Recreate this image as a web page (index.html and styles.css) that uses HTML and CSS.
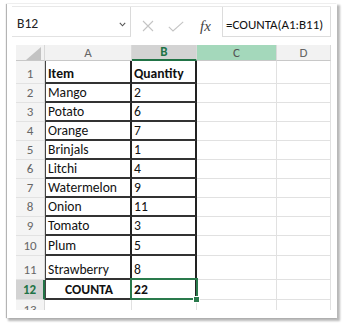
FILE: index.html
```html
<!DOCTYPE html>
<html>
<head>
<meta charset="utf-8">
<link rel="stylesheet" href="styles.css">
</head>
<body>
<div class="frame">
  <div class="fbar">
    <div class="namebox">
      <span class="nb-text">B12</span>
      <svg class="chev" width="7" height="5" viewBox="0 0 7 5"><path d="M0.8 0.8 L3.5 3.8 L6.2 0.8" fill="none" stroke="#555" stroke-width="1.1"/></svg>
    </div>
    <div class="fbtns">
      <svg class="ico-x" width="12" height="12" viewBox="0 0 12 12"><path d="M1 1 L11 11 M11 1 L1 11" stroke="#c4c4c4" stroke-width="1.1" fill="none"/></svg>
      <svg class="ico-ok" width="16" height="11" viewBox="0 0 16 11"><path d="M0.8 5.8 L5 10 L15.2 0.8" stroke="#c4c4c4" stroke-width="1.1" fill="none"/></svg>
      <span class="fx">fx</span>
    </div>
    <div class="formula">=COUNTA(A1:B11)</div>
  </div>
  <div class="sheet">
    <div class="corner"><svg width="16" height="13" viewBox="0 0 16 13"><polygon points="15,0 15,13 0,13" fill="#c3c3c3"/></svg></div>
    <div class="ch">A</div>
    <div class="ch sel-col">B</div>
    <div class="ch hl">C</div>
    <div class="ch">D</div>

    <div class="rh">1</div><div class="c a bold">Item</div><div class="c b bold">Quantity</div><div class="c"></div><div class="c"></div>
    <div class="rh">2</div><div class="c a">Mango</div><div class="c b">2</div><div class="c"></div><div class="c"></div>
    <div class="rh">3</div><div class="c a">Potato</div><div class="c b">6</div><div class="c"></div><div class="c"></div>
    <div class="rh">4</div><div class="c a">Orange</div><div class="c b">7</div><div class="c"></div><div class="c"></div>
    <div class="rh">5</div><div class="c a">Brinjals</div><div class="c b">1</div><div class="c"></div><div class="c"></div>
    <div class="rh">6</div><div class="c a">Litchi</div><div class="c b">4</div><div class="c"></div><div class="c"></div>
    <div class="rh">7</div><div class="c a">Watermelon</div><div class="c b">9</div><div class="c"></div><div class="c"></div>
    <div class="rh">8</div><div class="c a">Onion</div><div class="c b">11</div><div class="c"></div><div class="c"></div>
    <div class="rh">9</div><div class="c a">Tomato</div><div class="c b">3</div><div class="c"></div><div class="c"></div>
    <div class="rh">10</div><div class="c a">Plum</div><div class="c b">5</div><div class="c"></div><div class="c"></div>
    <div class="rh">11</div><div class="c a">Strawberry</div><div class="c b">8</div><div class="c"></div><div class="c"></div>
    <div class="rh sel-row">12</div><div class="c a bold center">COUNTA</div><div class="c active bold">22</div><div class="c"></div><div class="c"></div>
    <div class="rh last">13</div><div class="c plain"></div><div class="c plain"></div><div class="c"></div><div class="c"></div>
  </div>
</div>
</body>
</html>
```
FILE: styles.css
```css
html, body {
  margin: 0;
  padding: 0;
  background: #ffffff;
}
body {
  width: 344px;
  height: 328px;
  overflow: hidden;
  font-family: Carlito, Lato, "Liberation Sans", sans-serif;
}
.frame {
  margin: 4px 0 0 7px;
  width: 330px;
  height: 314px;
  box-sizing: border-box;
  padding: 2px 6px 0 5px;
  background: #ffffff;
  box-shadow: -1px 0 1px rgba(0,0,0,0.28), 2px 2px 2px 1px rgba(0,0,0,0.28);
}
.fbar {
  display: flex;
  height: 31px;
  border-top: 1px solid #e8e8e8;
  box-sizing: border-box;
}
.namebox {
  width: 119px;
  box-sizing: border-box;
  border-bottom: 1px solid #e2e2e2;
  border-right: 1px solid #dadada;
  display: flex;
  align-items: flex-end;
  justify-content: space-between;
  padding: 0 4px 5px 5px;
}
.nb-text {
  font-size: 13.6px;
  line-height: 14px;
  color: #222;
}
.chev {
  margin-bottom: 4px;
}
.fbtns {
  width: 91px;
  display: flex;
  align-items: flex-end;
  padding: 0 0 4px 11px;
  box-sizing: border-box;
}
.ico-x {
  margin-bottom: 1px;
}
.ico-ok {
  margin-left: 14px;
  margin-bottom: 1px;
}
.fx {
  font-family: "Liberation Serif", serif;
  font-style: italic;
  font-size: 15px;
  line-height: 14px;
  color: #444;
  margin-left: 16px;
}
.formula {
  flex: 1;
  border: 1px solid #dcdcdc;
  border-top: none;
  box-sizing: border-box;
  display: flex;
  align-items: flex-end;
  padding: 0 0 4px 3px;
  font-size: 13px;
  line-height: 14px;
  color: #111;
  white-space: nowrap;
  overflow: hidden;
}
.sheet {
  margin: 8px 0 0 4px;
  width: 315px;
  height: 265px;
  overflow: hidden;
  display: grid;
  grid-template-columns: 29px 87px 65px 80px 54px;
  grid-template-rows: 16px 23px repeat(8, 19px) 20px 24px 20px 20px;
  font-size: 13.6px;
  color: #111;
}
.sheet > div {
  box-sizing: border-box;
  min-width: 0;
  overflow: hidden;
}
.sheet > .c.active {
  overflow: visible;
}
.corner {
  background: #f2f2f2;
  border-right: 1px solid #d8d8d8;
  border-bottom: 1px solid #c8c8c8;
  display: flex;
  align-items: flex-start;
  justify-content: flex-end;
  padding: 2px 2px 0 0;
}
.corner svg {
  display: block;
}
.ch {
  background: #f2f2f2;
  border-right: 1px solid #dadada;
  border-bottom: 1px solid #c8c8c8;
  color: #666;
  font-size: 13px;
  display: flex;
  align-items: center;
  justify-content: center;
  line-height: 14px;
}
.ch.sel-col {
  background: #d3d3d3;
  color: #217346;
  font-weight: bold;
  border-bottom: 2px solid #217346;
}
.ch.hl {
  background: #a4d8bb;
  color: #555;
}
.rh {
  background: #f4f4f4;
  border-right: 1px solid #d8d8d8;
  border-bottom: 1px solid #e2e2e2;
  color: #666;
  font-size: 13px;
  display: flex;
  align-items: flex-end;
  justify-content: center;
  line-height: 14px;
  padding-bottom: 2px;
}
.rh.sel-row {
  background: #d3d3d3;
  color: #217346;
  font-weight: bold;
  border-right: 2px solid #217346;
}
.c {
  border-right: 1px solid #e1e1e1;
  border-bottom: 1px solid #e1e1e1;
  display: flex;
  align-items: flex-end;
  line-height: 15px;
  padding: 0 0 1px 3px;
  white-space: nowrap;
}
.c.a {
  border-left: 1px solid #444;
  border-right: 2px solid #222;
  border-bottom: 2px solid #333;
  padding-left: 2px;
}
.c.b {
  border-right: 2px solid #222;
  border-bottom: 2px solid #333;
  padding-left: 2px;
}
.c.plain {
  border-right: 1px solid #e1e1e1;
}
.bold {
  font-weight: bold;
}
.center {
  justify-content: center;
}
.c.active {
  position: relative;
  border-right: 2px solid #222;
  border-bottom: 2px solid #333;
  padding-left: 2px;
}
.c.active::after {
  content: "";
  position: absolute;
  left: -2px;
  top: -2px;
  right: -3px;
  bottom: -2px;
  border: 2px solid #2a7a4c;
}
.c.active::before {
  content: "";
  position: absolute;
  right: -5px;
  bottom: -5px;
  width: 5px;
  height: 5px;
  background: #2a7a4c;
  border: 1px solid #fff;
  z-index: 2;
}
```
